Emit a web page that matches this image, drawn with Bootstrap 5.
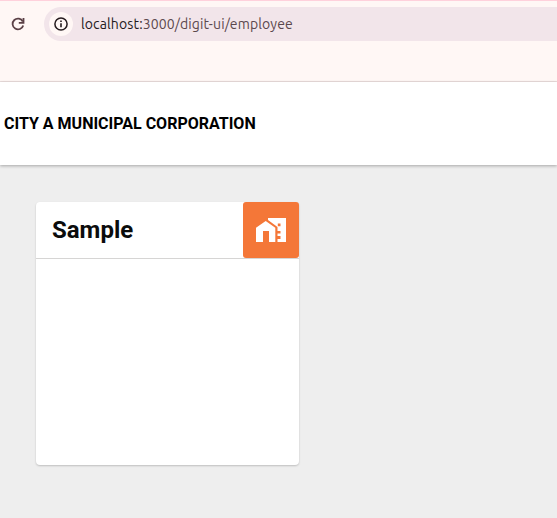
<!DOCTYPE html>
<html lang="en">
<head>
<meta charset="utf-8">
<meta name="viewport" content="width=device-width, initial-scale=1">
<title>City A Municipal Corporation</title>
<link href="https://cdn.jsdelivr.net/npm/bootstrap@5.3.0/dist/css/bootstrap.min.css" rel="stylesheet">
<style>
body{background:#eee;font-family:Roboto,sans-serif;height:518px;overflow:hidden}
.browser-bar{height:82px;background:#fff7f5;border-top:1px solid #ffd1dc;border-bottom:1px solid #ecdfde;padding:6px 0 0 10px}
.reload{width:16px;height:16px;margin-right:18px}
.address{height:34px;background:#f2e5ea;border-radius:17px 0 0 17px;padding-left:5px}
.site-info{width:24px;height:24px;background:#fff7f5;margin-right:8px}
.url{font-family:Ubuntu,"Noto Sans",sans-serif;font-size:14px;line-height:20px;letter-spacing:.13px;color:#5b484d;white-space:nowrap}
.url span{color:#241a1d}
.city-bar{height:83px;box-shadow:0 1px 3px rgba(0,0,0,.3);padding:1px 4px 0}
.city-name{font-size:16px;line-height:20px;color:#000}
.module-card{width:263px;height:263px;margin:37px 0 0 36px;border-radius:4px;box-shadow:0 1px 2px rgba(0,0,0,.2)}
.module-head{height:57px;border-bottom:1px solid #d6d5d4;padding-left:16px}
.module-title{font-size:24px;line-height:28px;color:#0b0c0c}
.module-icon{width:56px;height:56px;background:#f47738;border-radius:3px}
</style>
<script src="https://cdn.jsdelivr.net/npm/bootstrap@5.3.0/dist/js/bootstrap.bundle.min.js"></script>
</head>
<body>
<div class="browser-bar">
  <div class="d-flex align-items-center">
    <svg class="reload flex-shrink-0" viewBox="0 0 16 16" fill="none" stroke="#5b4046" stroke-width="1.8"><path d="M12.8 5.5A5.4 5.4 0 1 0 13.2 9.4"/><path d="M13.5 2v4.8H8.8"/></svg>
    <div class="address d-flex align-items-center flex-grow-1">
      <div class="site-info rounded-circle d-flex align-items-center justify-content-center flex-shrink-0">
        <svg width="14" height="14" viewBox="0 0 14 14"><circle cx="7" cy="7" r="6.1" fill="none" stroke="#241a1d" stroke-width="1.5"/><path d="M6.2 6.2h1.6v4.1H6.2zM6.2 3.6h1.6v1.5H6.2z" fill="#241a1d"/></svg>
      </div>
      <div class="url"><span>localhost:</span>3000/digit-ui/employee</div>
    </div>
  </div>
</div>
<header class="city-bar bg-white d-flex align-items-center">
  <h1 class="city-name fw-bold mb-0">CITY A MUNICIPAL CORPORATION</h1>
</header>
<main class="d-flex">
  <section class="module-card bg-white">
    <div class="module-head d-flex align-items-center justify-content-between">
      <h2 class="module-title fw-bold mb-0">Sample</h2>
      <div class="module-icon d-flex align-items-center justify-content-center">
        <svg width="30" height="24" viewBox="0 0 30 24" fill="#fff"><path d="M0 24V9.7L9.7 3l9.6 6.7V24H13V13H7v11z"/><path d="M12 0h18v24h-8.5v-3h3v-3h-3v-2.5h3v-2.500h-3V9L12 2zM21.800 5.600v2.600h2.700V5.600z" fill-rule="evenodd"/></svg>
      </div>
    </div>
  </section>
</main>
</body>
</html>
